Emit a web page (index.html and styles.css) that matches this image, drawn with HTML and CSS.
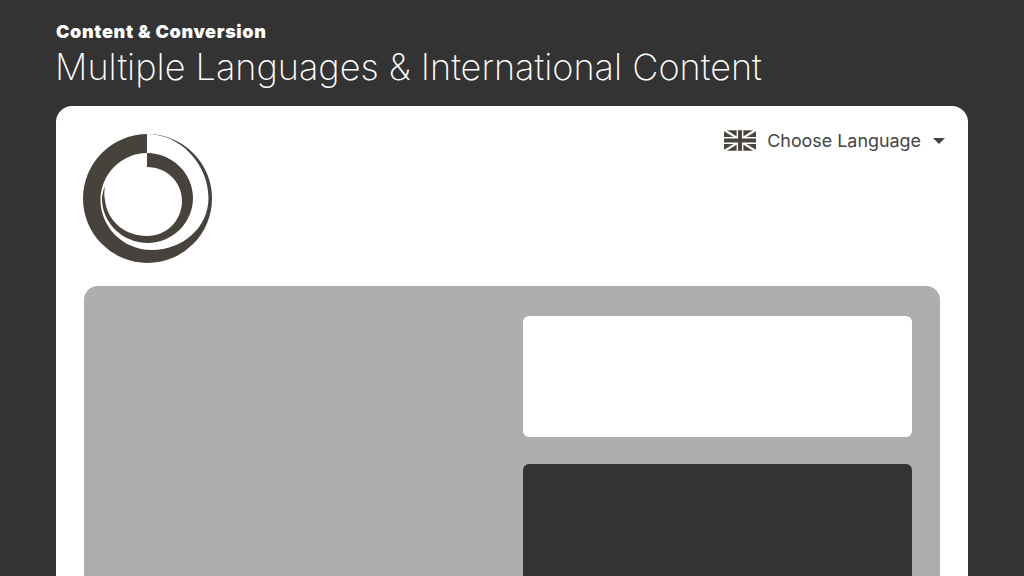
FILE: index.html
```html
<!DOCTYPE html>
<html lang="en">
<head>
    <meta charset="UTF-8">
    <meta name="viewport" content="width=device-width, initial-scale=1.0">
    <title>Multiple Languages &amp; International Content</title>
    <link rel="stylesheet" href="styles.css">
</head>
<body>
    <!-- Heading -->
    <header class="heading">
        <div class="eyebrow">Content &amp; Conversion</div>
        <h1 class="title">Multiple Languages &amp; International Content</h1>
    </header>

    <!-- Site mockup -->
    <div class="card">
        <div class="card-top">
            <svg class="logo" viewBox="83 134 129 129" width="129" height="129">
                <circle cx="147.5" cy="198.5" r="64.5" fill="#47423c"/>
                <path fill="#fff" d="M147 134C181 134 208.500 165 208.500 198C208.500 228 182 250 152 250C122 250 100.500 226 100.500 200C100.500 174 122 153 147 153Z"/>
                <path fill="#47423c" d="M147 153C172 153 193 173 193 198C193 223 172 243 148 243C122 243 102 222 102 199C102 195 103 191 105 186C104 192 104 196 105 200C107 221 125 236 147 236C167 236 182 220 182 201C182 182 167 167 147 167Z"/>
            </svg>
            <div class="lang">
                <svg class="flag" viewBox="0 0 33 21" width="32" height="21">
                    <rect width="33" height="21" fill="#47423c"/>
                    <path d="M0 0L33 21M33 0L0 21" stroke="#fff" stroke-width="3.4"/>
                    <path d="M0 1.5L12 9M33 19.5L21 12M33 1.500L21 9M0 19.5L12 12" stroke="#47423c" stroke-width="1.2"/>
                    <path d="M16.5 0V21M0 10.5H33" stroke="#fff" stroke-width="7"/>
                    <path d="M16.5 0V21M0 10.5H33" stroke="#47423c" stroke-width="4"/>
                </svg>
                <span class="lang-label">Choose Language</span>
                <span class="caret"></span>
            </div>
        </div>

        <div class="panel">
            <div class="panel-side">
                <div class="box-light"></div>
                <div class="box-dark"></div>
            </div>
        </div>
    </div>
</body>
</html>
```

FILE: styles.css
```css
html, body {
    height: 100%;
}

body {
    display: flex;
    flex-direction: column;
    margin: 0;
    background-color: #333333;
    font-family: Inter, "Liberation Sans", sans-serif;
    overflow: hidden;
}

.heading {
    flex: none;
    padding: 21px 56px 0;
    height: 106px;
    box-sizing: border-box;
    color: white;
}

.eyebrow {
    font-size: 18px;
    line-height: 22px;
    font-weight: 900;
    letter-spacing: 0.65px;
}

.title {
    margin: 2px 0 0 -1px;
    font-size: 36.1px;
    line-height: 44px;
    font-weight: 200;
    white-space: nowrap;
}

.card {
    display: flex;
    flex-direction: column;
    flex: 1;
    min-height: 0;
    margin: 0 56px;
    padding: 28px 28px 0;
    box-sizing: border-box;
    background-color: white;
    border-radius: 16px 16px 0 0;
}

.card-top {
    flex: none;
    display: flex;
    justify-content: space-between;
    align-items: flex-start;
    height: 152px;
}

.logo {
    margin-left: -1px;
    display: block;
}

.lang {
    display: flex;
    align-items: center;
    margin-top: -4px;
    margin-right: -5px;
    color: #444444;
}

.flag {
    display: block;
}

.lang-label {
    margin-left: 11px;
    font-size: 17.9px;
    line-height: 21px;
}

.caret {
    margin-left: 12px;
    border-left: 6.5px solid transparent;
    border-right: 6.5px solid transparent;
    border-top: 6.5px solid #47423c;
}

.panel {
    flex: 1;
    min-height: 0;
    display: flex;
    justify-content: flex-end;
    padding: 30px 28px 0;
    box-sizing: border-box;
    background-color: #aeaeae;
    border-radius: 14px 14px 0 0;
}

.panel-side {
    display: flex;
    flex-direction: column;
    gap: 27px;
    width: 389px;
}

.box-light {
    flex: none;
    height: 121px;
    background-color: white;
    border-radius: 6px;
}

.box-dark {
    flex: 1;
    background-color: #333333;
    border-radius: 6px 6px 0 0;
}
```
